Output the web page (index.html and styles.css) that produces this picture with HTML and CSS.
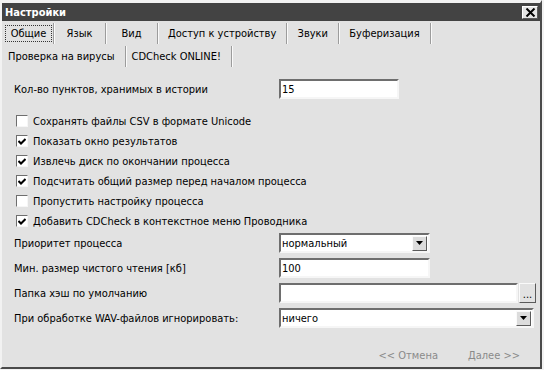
FILE: index.html
```html
<!DOCTYPE html>
<html>
  <head>
    <title>Настройки</title>
    <link rel="stylesheet" href="styles.css">
  </head>
  <body>
    <div class="window">
      <div class="titlebar">
        <span class="title">Настройки</span>
        <span class="close">
          <svg width="11" height="9" viewBox="0 0 11 9"><path d="M1.5 0.5 L9.5 8.5 M9.5 0.5 L1.5 8.5" stroke="#000" stroke-width="2"/></svg>
        </span>
      </div>

      <div class="tab-row">
        <div class="tab active"><span class="focus">Общие</span></div>
        <div class="tab">Язык</div>
        <div class="tab">Вид</div>
        <div class="tab">Доступ к устройству</div>
        <div class="tab">Звуки</div>
        <div class="tab">Буферизация</div>
      </div>
      <div class="tab-row second">
        <div class="tab">Проверка на вирусы</div>
        <div class="tab">CDCheck ONLINE!</div>
      </div>

      <div class="panel">
        <div class="row history">
          <span class="caption">Кол-во пунктов, хранимых в истории</span>
          <div class="field short"><span class="value">15</span></div>
        </div>

        <ul class="checks">
          <li><span class="box"></span>Сохранять файлы CSV в формате Unicode</li>
          <li><span class="box"><svg width="8" height="7" viewBox="0 0 8 7"><path d="M0.5 3 L3 5.5 L7.5 1" fill="none" stroke="#000" stroke-width="2"/></svg></span>Показать окно результатов</li>
          <li><span class="box"><svg width="8" height="7" viewBox="0 0 8 7"><path d="M0.5 3 L3 5.5 L7.5 1" fill="none" stroke="#000" stroke-width="2"/></svg></span>Извлечь диск по окончании процесса</li>
          <li><span class="box"><svg width="8" height="7" viewBox="0 0 8 7"><path d="M0.5 3 L3 5.5 L7.5 1" fill="none" stroke="#000" stroke-width="2"/></svg></span>Подсчитать общий размер перед началом процесса</li>
          <li><span class="box"></span>Пропустить настройку процесса</li>
          <li><span class="box"><svg width="8" height="7" viewBox="0 0 8 7"><path d="M0.5 3 L3 5.5 L7.5 1" fill="none" stroke="#000" stroke-width="2"/></svg></span>Добавить CDCheck в контекстное меню Проводника</li>
        </ul>

        <div class="rows">
          <div class="row">
            <span class="caption">Приоритет процесса</span>
            <div class="field mid combo">
              <span class="value">нормальный</span>
              <span class="drop"><svg width="7" height="4" viewBox="0 0 7 4"><path d="M0 0 H7 L3.5 4 Z" fill="#000"/></svg></span>
            </div>
          </div>
          <div class="row">
            <span class="caption">Мин. размер чистого чтения [кб]</span>
            <div class="field mid"><span class="value">100</span></div>
          </div>
          <div class="row">
            <span class="caption">Папка хэш по умолчанию</span>
            <div class="field long"><span class="value"></span></div>
            <span class="browse">...</span>
          </div>
          <div class="row">
            <span class="caption">При обработке WAV-файлов игнорировать:</span>
            <div class="field full combo">
              <span class="value">ничего</span>
              <span class="drop"><svg width="7" height="4" viewBox="0 0 7 4"><path d="M0 0 H7 L3.5 4 Z" fill="#000"/></svg></span>
            </div>
          </div>
        </div>

        <div class="actions">
          <span class="button">&lt;&lt; Отмена</span>
          <span class="button">Далее &gt;&gt;</span>
        </div>
      </div>
    </div>
  </body>
</html>
```

FILE: styles.css
```css
html, body {
  margin: 0;
  padding: 0;
}

body {
  background-color: #F2F2F2;
  font-family: "DejaVu Sans Condensed", "Liberation Sans", Arial, sans-serif;
  font-stretch: condensed;
  font-size: 11px;
  color: #000;
}

.window {
  width: 542px;
  height: 369px;
  box-sizing: border-box;
  background-color: #E2E2E2;
  border-top: 3px solid #F2F2F2;
  border-left: 2px solid #F2F2F2;
  border-right: 2px solid #4A4A4A;
  border-bottom: 2px solid #4A4A4A;
  display: flex;
  flex-direction: column;
}

.titlebar {
  height: 18px;
  background-color: #434343;
  display: flex;
  align-items: center;
  justify-content: space-between;
  padding: 0 2px 0 3px;
}

.title {
  color: #FFF;
  font-weight: bold;
  font-size: 11px;
}

.close {
  width: 16px;
  height: 13px;
  box-sizing: border-box;
  background-color: #E4E4E4;
  border: 1px solid;
  border-color: #FFF #5A5A5A #5A5A5A #FFF;
  display: flex;
  align-items: center;
  justify-content: center;
}

/* tabs */

.tab-row {
  display: flex;
  height: 21px;
  margin-top: 2px;
}

.tab-row.second {
  margin-top: 2px;
}

.tab {
  min-width: 52px;
  padding: 0 10px;
  box-sizing: border-box;
  display: flex;
  align-items: center;
  justify-content: center;
  border-right: 1px solid #9C9C9C;
  box-shadow: 1px 0 0 #FAFAFA;
  white-space: nowrap;
}

.tab.active {
  padding: 0 0 0 2px;
}

.tab-row.second .tab {
  padding: 0 10px 0 6px;
}

.focus {
  border: 1px dotted #333;
  padding: 1px 5px 1px 5px;
}

/* panel */

.panel {
  flex: 1;
  padding: 12px 0 0 12px;
  display: flex;
  flex-direction: column;
}

.row {
  display: flex;
  align-items: center;
  height: 20px;
}

.caption {
  width: 265px;
  flex: none;
}

.field {
  height: 20px;
  box-sizing: border-box;
  background-color: #FFF;
  border: 2px solid;
  border-color: #6E6E6E #F6F6F6 #F6F6F6 #6E6E6E;
  display: flex;
  align-items: center;
}

.value {
  flex: 1;
  padding-left: 1px;
}

.field.short {
  width: 120px;
}

.field.mid {
  width: 151px;
}

.field.long {
  width: 239px;
}

.field.full {
  width: 255px;
}

.drop {
  width: 15px;
  height: 15px;
  box-sizing: border-box;
  background-color: #DCDCDC;
  border: 1px solid;
  border-color: #FAFAFA #5A5A5A #5A5A5A #FAFAFA;
  display: flex;
  align-items: center;
  justify-content: center;
  margin-right: 1px;
}

.browse {
  width: 17px;
  height: 20px;
  box-sizing: border-box;
  margin-left: 1px;
  background-color: #E2E2E2;
  border: 1px solid;
  border-color: #FAFAFA #5A5A5A #5A5A5A #FAFAFA;
  display: flex;
  align-items: flex-end;
  justify-content: center;
  line-height: 14px;
}

.checks {
  list-style: none;
  margin: 12px 0 0 0;
  padding: 0;
}

.checks li {
  height: 20px;
  display: flex;
  align-items: center;
}

.box {
  width: 12px;
  height: 12px;
  box-sizing: border-box;
  margin: 0 5px 0 2px;
  background-color: #FFF;
  border: 1px solid;
  border-color: #6E6E6E #F6F6F6 #F6F6F6 #6E6E6E;
  display: flex;
  align-items: center;
  justify-content: center;
}

.rows {
  margin-top: 2px;
  display: flex;
  flex-direction: column;
  gap: 5px;
}

.actions {
  display: flex;
  justify-content: flex-end;
  gap: 30px;
  margin-top: 18px;
  padding-right: 20px;
}

.button {
  color: #8A8A8A;
  height: 20px;
  line-height: 20px;
}
```
